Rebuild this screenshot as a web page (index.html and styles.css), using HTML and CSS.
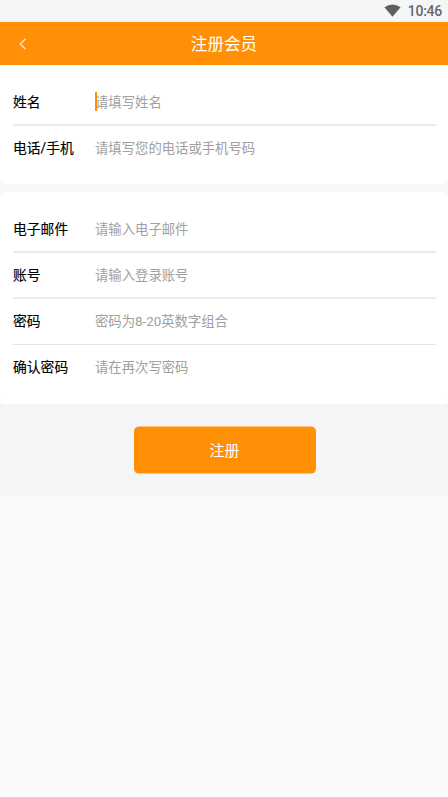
FILE: index.html
```html
<!DOCTYPE html>
<html lang="zh-CN">
<head>
<meta charset="utf-8">
<title>注册会员</title>
<link rel="stylesheet" href="styles.css">
</head>
<body>
<div class="status">
  <svg class="wifi" width="17" height="13" viewBox="0 0 17 13"><path d="M0.4 3.2Q8.5-2.4 16.6 3.2L8.5 12.8Z" fill="#5f6062"/></svg>
  <span class="time">10:46</span>
</div>
<header class="bar">
  <svg class="back" width="8" height="12" viewBox="0 0 8 12"><path d="M6.6 0.7L1.2 6l5.4 5.3" fill="none" stroke="#ffecc8" stroke-width="1.3"/></svg>
  <h1>注册会员</h1>
</header>
<main class="page">
  <div class="cards">
    <section class="card first">
      <div class="row"><label>姓名</label><span class="field focused">请填写姓名</span></div>
      <div class="row"><label>电话/手机</label><span class="field">请填写您的电话或手机号码</span></div>
    </section>
    <section class="card second">
      <div class="row"><label>电子邮件</label><span class="field">请输入电子邮件</span></div>
      <div class="row"><label>账号</label><span class="field">请输入登录账号</span></div>
      <div class="row thin"><label>密码</label><span class="field">密码为8-20英数字组合</span></div>
      <div class="row"><label>确认密码</label><span class="field">请在再次写密码</span></div>
    </section>
  </div>
  <button class="submit">注册</button>
</main>
</body>
</html>
```
FILE: styles.css
```css
* { box-sizing: border-box; }
body {
  margin: 0;
  background: #fafafa;
  font-family: Roboto, "Noto Sans CJK SC", sans-serif;
}
.status {
  height: 22px;
  background: #f5f6f8;
  display: flex;
  justify-content: flex-end;
  align-items: center;
  gap: 7px;
  padding-right: 6px;
}
.wifi { margin-bottom: 2px; }
.time { font-size: 14px; font-weight: 500; line-height: 22px; letter-spacing: -0.25px; color: #66676a; }
.bar {
  height: 43px;
  background: #ff9006;
  display: grid;
  grid-template-columns: 60px 1fr 60px;
  align-items: center;
}
.back { margin-left: 19px; }
h1 {
  margin: 0;
  padding-top: 2px;
  font-size: 16.6px;
  font-weight: 400;
  line-height: 41px;
  color: #fff;
  text-align: center;
}
.page { height: 431px; background: #f4f5f7; }
.cards { background: linear-gradient(#f7f7f7 0 200px, #f4f5f7 200px); }
.card { background: #fff; padding: 15px 12px 0 13px; border-radius: 5px; }
.first { height: 119px; border-radius: 0 0 5px 5px; }
.second { height: 212px; margin-top: 8px; }
.row {
  height: 46px;
  display: flex;
  align-items: center;
  padding-bottom: 1px;
  border-bottom: 2px solid #ebebeb;
}
.row.thin { border-bottom: 1px solid #e4e4e4; padding-bottom: 2px; }
.row:last-child { border-bottom: 0; padding-bottom: 3px; }
label {
  width: 82px;
  padding-bottom: 2px;
  font-size: 13.8px;
  color: #000;
  -webkit-text-stroke: 0.15px #000;
}
.row:last-child label { padding-bottom: 1px; }
.field { position: relative; font-size: 13.35px; color: #a0a0a0; }
.focused::before {
  content: "";
  position: absolute;
  left: 0;
  top: 0;
  width: 2px;
  height: 19px;
  background: #ff9006;
}
.submit {
  display: block;
  width: 182px;
  height: 47px;
  margin: 23px auto 0;
  padding: 0 1px 2px 0;
  transform: translate(1px, -0.4px);
  border: 0;
  border-radius: 5px;
  background: #ff9006;
  color: #fff;
  font: 400 15px Roboto, "Noto Sans CJK SC", sans-serif;
}
```
